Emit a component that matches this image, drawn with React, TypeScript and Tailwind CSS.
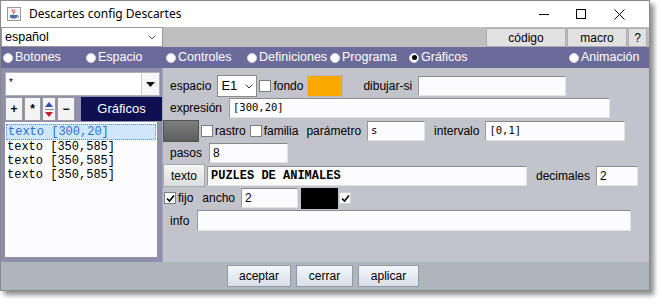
import React from "react";

const F = "font-['Liberation_Sans',Arial,sans-serif]";

function Check({ checked = false, plain = false }: { checked?: boolean; plain?: boolean }) {
  return (
    <div
      className={`w-[12px] h-[12px] shrink-0 bg-white flex items-center justify-center ${
        plain ? "border border-[#d0d0d0]" : "border border-[#7d7d7d]"
      }`}
    >
      {checked && (
        <svg width="9" height="9" viewBox="0 0 9 9">
          <path d="M1 4.5 L3.5 7 L8 1.5" stroke="#000" strokeWidth="1.6" fill="none" />
        </svg>
      )}
    </div>
  );
}

function Input({ w, value, mono = "a", h = "h-[20px]" }: { w: string; value?: string; mono?: "a" | "b" | "c"; h?: string }) {
  const font =
    mono === "a"
      ? "font-['DejaVu_Sans_Mono',monospace] text-[10.5px]"
      : mono === "b"
      ? "font-['Liberation_Mono',monospace] text-[12px] font-bold"
      : "font-['Liberation_Sans',Arial,sans-serif] text-[12px]";
  return (
    <div
      className={`${w} ${h} shrink-0 bg-[#fcfcfe] border border-[#e2e2e6] border-t-[#8a8a8a] border-l-[#9a9a9a] flex items-center pl-[3px] text-black ${font}`}
    >
      {value}
    </div>
  );
}

function Radio({ selected = false }: { selected?: boolean }) {
  return (
    <div className="w-[10px] h-[10px] rounded-full bg-white border border-[#d8d8e6] shrink-0 flex items-center justify-center">
      {selected && <div className="w-[5px] h-[5px] rounded-full bg-black" />}
    </div>
  );
}

function Tab({ label, selected = false, w }: { label: string; selected?: boolean; w: string }) {
  return (
    <div className={`${w} flex items-center gap-[2px] shrink-0`}>
      <Radio selected={selected} />
      <span className="text-white text-[12.5px]">{label}</span>
    </div>
  );
}

function Label({ children, cls = "" }: { children: React.ReactNode; cls?: string }) {
  return <span className={`text-[12px] text-black whitespace-nowrap shrink-0 ${cls}`}>{children}</span>;
}

export default function App() {
  return (
    <div className={`w-[662px] h-[304px] bg-white ${F}`}>
      <div className="w-[650px] h-[291px] flex flex-col border border-[#8a8a8a] shadow-[4px_4px_5px_rgba(0,0,0,0.45)] bg-[#c3c3cb] overflow-hidden">
        {/* Title bar */}
        <div className="h-[26px] shrink-0 bg-white flex items-center">
          <div className="ml-[6px] w-[14px] h-[14px] border border-[#9a9a9a] bg-[#f4f4f4] flex items-center justify-center">
            <svg width="12" height="12" viewBox="0 0 12 12">
              <path d="M5 1 Q3.5 2.5 5 4 Q6.5 5.5 5 6.5" stroke="#d23b1e" strokeWidth="1" fill="none" />
              <path d="M7 2 Q6 3 7 4.5" stroke="#d23b1e" strokeWidth="0.9" fill="none" />
              <path d="M2 7 H9 V8.5 Q9 10.5 5.5 10.5 Q2 10.5 2 8.5 Z" fill="#4a6fa5" />
              <path d="M9 7.5 Q11 7.5 10.5 9 Q10 9.8 8.8 9.5" stroke="#4a6fa5" strokeWidth="0.8" fill="none" />
            </svg>
          </div>
          <span className="ml-[8px] text-[12px] text-black font-['Noto_Sans',sans-serif]">Descartes config Descartes</span>
          <div className="ml-auto flex items-center h-full">
            <div className="w-[37px] flex justify-center">
              <div className="w-[10px] h-[1px] bg-black" />
            </div>
            <div className="w-[38px] flex justify-center">
              <div className="w-[10px] h-[10px] border border-black" />
            </div>
            <div className="w-[39px] flex justify-center mr-[10px]">
              <svg width="11" height="11" viewBox="0 0 11 11">
                <path d="M0.5 0.5 L10.5 10.5 M10.5 0.5 L0.5 10.5" stroke="#000" strokeWidth="1" />
              </svg>
            </div>
          </div>
        </div>

        {/* Row 2 */}
        <div className="h-[20px] shrink-0 bg-[#bfbfbf] flex">
          <div className="w-[162px] h-[20px] bg-white border border-[#9a9a9a] flex items-center justify-between px-[3px]">
            <span className="text-[12.5px] text-black">español</span>
            <svg width="8" height="5" viewBox="0 0 8 5" className="mr-[3px]">
              <path d="M0.5 0.5 L4 4 L7.5 0.5" stroke="#555" strokeWidth="1" fill="none" />
            </svg>
          </div>
          <div className="ml-auto flex h-[19px] mt-[1px] mr-[2px]">
            <div className="w-[80px] bg-[#e1e1e1] border border-[#adadad] flex items-center justify-center text-[12px]">código</div>
            <div className="w-[60px] ml-[1px] bg-[#e1e1e1] border border-[#adadad] flex items-center justify-center text-[12px]">macro</div>
            <div className="w-[19px] ml-[1px] bg-[#e1e1e1] border border-[#adadad] flex items-center justify-center text-[12px]">?</div>
          </div>
        </div>

        {/* Tab bar */}
        <div className="h-[21px] shrink-0 bg-[#6b6b9b] flex items-center pl-[2px]">
          <Tab label="Botones" w="w-[83px]" />
          <Tab label="Espacio" w="w-[80px]" />
          <Tab label="Controles" w="w-[81px]" />
          <Tab label="Definiciones" w="w-[83px]" />
          <Tab label="Programa" w="w-[79px]" />
          <Tab label="Gráficos" selected w="w-[160px]" />
          <Tab label="Animación" w="w-[80px]" />
        </div>

        {/* Main */}
        <div className="flex-1 flex min-h-0">
          {/* Left panel */}
          <div className="w-[161px] shrink-0 bg-[#8f8fad] pl-[4px] pt-[4px] pb-[5px] flex flex-col">
            <div className="h-[24px] w-[155px] flex bg-white border border-[#b0b0c0]">
              <div className="flex-1 text-[10px] pl-[3px] pt-[2px]">*</div>
              <div className="w-[18px] bg-[#f6f6f6] border-l border-[#d0d0d0] flex items-center justify-center">
                <svg width="9" height="5" viewBox="0 0 9 5">
                  <path d="M0 0 H9 L4.5 5 Z" fill="#111" />
                </svg>
              </div>
            </div>
            <div className="h-[24px] flex items-stretch mt-[1px]">
              <div className="w-[18px] bg-[#f4f4f4] border border-[#9a9a9a] flex items-center justify-center text-[12px] font-bold">+</div>
              <div className="w-[17px] ml-[1px] bg-[#f4f4f4] border border-[#9a9a9a] flex items-center justify-center text-[12px] font-bold">*</div>
              <div className="w-[14px] ml-[1px] bg-[#f4f4f4] border border-[#9a9a9a] flex flex-col items-center justify-center gap-[2px]">
                <svg width="8" height="5" viewBox="0 0 8 5"><path d="M0 5 L4 0 L8 5 Z" fill="#2b4fb5" /></svg>
                <div className="w-[9px] h-[1px] bg-[#888]" />
                <svg width="8" height="5" viewBox="0 0 8 5"><path d="M0 0 L8 0 L4 5 Z" fill="#c0202a" /></svg>
              </div>
              <div className="w-[18px] ml-[1px] bg-[#f4f4f4] border border-[#9a9a9a] flex items-center justify-center text-[12px] font-bold">−</div>
              <div className="flex-1 ml-[6px] bg-[#0f1052] flex items-center justify-center text-white text-[13px]">Gráficos</div>
            </div>
            <div className="flex-1 w-[152px] mt-[1px] bg-[#fcfcfe] pt-[2px] font-['Liberation_Mono',monospace] text-[12px] leading-[14px]">
              <div className="mx-[1px] bg-[#cfe6fb] border border-dotted border-[#4a8ad8] text-[#2e6fd0] pl-[1px]">texto [300,20]</div>
              <div className="pl-[2px] text-black">texto [350,585]</div>
              <div className="pl-[2px] text-black">texto [350,585]</div>
              <div className="pl-[2px] text-black">texto [350,585]</div>
            </div>
          </div>

          {/* Right form */}
          <div className="flex-1 bg-[#c3c3cb] border-l border-[#a8a8b8] pt-[6px] flex flex-col">
            {/* row 1 */}
            <div className="h-[23px] flex items-center">
              <Label cls="ml-[7px]">espacio</Label>
              <div className="ml-[6px] w-[40px] h-[22px] bg-white border border-[#8a8a8a] flex items-center justify-between px-[3px] mt-[1px]">
                <span className="text-[13px]">E1</span>
                <svg width="8" height="5" viewBox="0 0 8 5"><path d="M0.5 0.5 L4 4 L7.5 0.5" stroke="#333" strokeWidth="1" fill="none" /></svg>
              </div>
              <div className="ml-[2px]"><Check /></div>
              <Label cls="ml-[2px]">fondo</Label>
              <div className="ml-[4px] w-[36px] h-[22px] bg-[#f9a800] border border-[#b9b9b9]" />
              <Label cls="ml-[20px]">dibujar-si</Label>
              <div className="ml-[6px]"><Input w="w-[148px]" /></div>
            </div>
            {/* row 2 */}
            <div className="h-[21px] flex items-center">
              <Label cls="ml-[7px]">expresión</Label>
              <div className="ml-[7px]"><Input w="w-[381px]" value="[300,20]" /></div>
            </div>
            {/* row 3 */}
            <div className="h-[25px] flex items-center">
              <div className="w-[36px] h-[22px] bg-gradient-to-b from-[#7e7e7e] to-[#5e5e5e] border border-[#555]" />
              <div className="ml-[2px]"><Check /></div>
              <Label cls="ml-[2px]">rastro</Label>
              <div className="ml-[4px]"><Check /></div>
              <Label cls="ml-[2px]">familia</Label>
              <Label cls="ml-[8px]">parámetro</Label>
              <div className="ml-[6px]"><Input w="w-[58px]" value="s" /></div>
              <Label cls="ml-[9px]">intervalo</Label>
              <div className="ml-[6px]"><Input w="w-[140px]" value="[0,1]" /></div>
            </div>
            {/* row 4 */}
            <div className="h-[20px] flex items-center">
              <Label cls="ml-[7px]">pasos</Label>
              <div className="ml-[7px]"><Input w="w-[79px]" value="8" mono="c" /></div>
            </div>
            {/* row 5 */}
            <div className="h-[23px] flex items-center mt-[1px]">
              <div className="w-[42px] h-[23px] bg-gradient-to-b from-[#f6f6f6] to-[#dcdcdc] border border-[#a8a8a8] flex items-center justify-center text-[12px]">texto</div>
              <div className="ml-[2px]"><Input w="w-[320px]" value="PUZLES DE ANIMALES" mono="b" /></div>
              <Label cls="ml-[9px]">decimales</Label>
              <div className="ml-[6px]"><Input w="w-[42px]" value="2" mono="c" /></div>
            </div>
            {/* row 6 */}
            <div className="h-[22px] flex items-center">
              <div className="ml-[1px]"><Check checked /></div>
              <Label cls="ml-[2px]">fijo</Label>
              <Label cls="ml-[9px]">ancho</Label>
              <div className="ml-[6px]"><Input w="w-[57px]" value="2" mono="c" /></div>
              <div className="ml-[3px] w-[37px] h-[21px] bg-black" />
              <div className="ml-[1px]"><Check checked plain /></div>
            </div>
            {/* row 7 */}
            <div className="h-[23px] flex items-center">
              <Label cls="ml-[7px]">info</Label>
              <div className="ml-[8px]"><Input w="w-[434px]" h="h-[21px]" /></div>
            </div>
          </div>
        </div>

        {/* Bottom bar */}
        <div className="h-[28px] shrink-0 bg-[#aeb6bc] flex items-center justify-center gap-[5px] pr-[4px]">
          <div className="w-[64px] h-[22px] bg-gradient-to-b from-[#f4f7fa] to-[#d6dfe8] border border-[#8d9bab] flex items-center justify-center text-[12px]">aceptar</div>
          <div className="w-[57px] h-[22px] bg-gradient-to-b from-[#f4f7fa] to-[#d6dfe8] border border-[#8d9bab] flex items-center justify-center text-[12px]">cerrar</div>
          <div className="w-[61px] h-[22px] bg-gradient-to-b from-[#f4f7fa] to-[#d6dfe8] border border-[#8d9bab] flex items-center justify-center text-[12px]">aplicar</div>
        </div>
      </div>
    </div>
  );
}
